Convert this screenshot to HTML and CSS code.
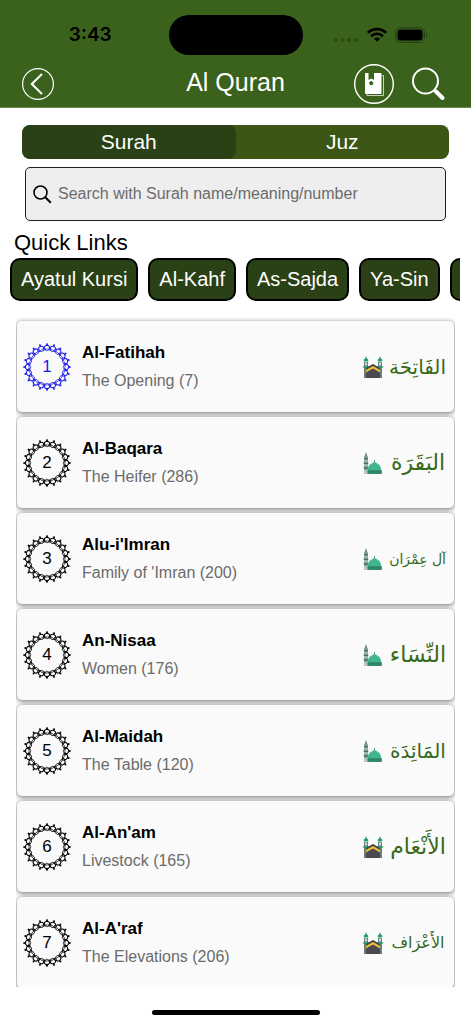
FILE: index.html
```html
<!DOCTYPE html>
<html lang="en">
<head>
    <meta charset="UTF-8">
    <meta name="viewport" content="width=device-width, initial-scale=1.0">
    <title>Al Quran</title>
    <link rel="stylesheet" href="styles.css">
</head>
<body>
    <!-- shared icons -->
    <svg class="defs" aria-hidden="true">
        <symbol id="rosette" viewBox="0 0 48 48">
            <defs>
                <g id="petal">
                    <path d="M22.500 6C20 4.800 21.800 2.400 24 2.400C26.200 2.400 28 4.800 25.500 6" fill="none" stroke="currentColor" stroke-width="1.100"/>
                    <path d="M20.900 6.900Q24 5 27.100 6.900M21 6.500Q24 9.200 27 6.500" fill="none" stroke="currentColor" stroke-width="0.700"/>
                    <circle cx="24" cy="1.200" r="1" fill="currentColor"/>
                </g>
                <g id="quarter">
                    <use href="#petal"/>
                    <use href="#petal" transform="rotate(18 24 24)"/>
                    <use href="#petal" transform="rotate(36 24 24)"/>
                    <use href="#petal" transform="rotate(54 24 24)"/>
                    <use href="#petal" transform="rotate(72 24 24)"/>
                </g>
            </defs>
            <use href="#quarter"/>
            <use href="#quarter" transform="rotate(90 24 24)"/>
            <use href="#quarter" transform="rotate(180 24 24)"/>
            <use href="#quarter" transform="rotate(270 24 24)"/>
        </symbol>
        <symbol id="kaaba" viewBox="0 0 20 22">
            <path d="M1 6h4v16H1zM15 6h4v16h-4z" fill="#66827c"/>
            <path d="M3 0l1.200 3H1.800zM17 0l1.200 3h-2.400zM0.800 3h4.400v2.400H.8zM14.800 3h4.400v2.400h-4.400zM0.300 10h5.400v2H.3zM14.300 10h5.400v2h-5.400z" fill="#2c9a76"/>
            <path d="M2 6.500h2v3H2zM16 6.500h2v3h-2z" fill="#c5ddd5"/>
            <path d="M3 13l7-4.500 7 4.500v9H3z" fill="#4a4850"/>
            <path d="M3 14l7-4 7 4v2.400l-7-4-7 4z" fill="#f0bd32"/>
            <path d="M3.500 12.300L10 8.500l6.500 3.800" fill="none" stroke="#34323a"/>
        </symbol>
        <symbol id="mosque" viewBox="0 0 20 22">
            <path d="M3 0l1.500 4h-3zM1.300 4h3.400v18H1.300z" fill="#71958c"/>
            <path d="M1 6h4v1.500H1zM.7 10.500h4.600V12H.7zM.7 15h4.600v1.500H.7z" fill="#48766a"/>
            <path d="M2.400 7.500h1.200v3H2.400zM2.400 12h1.200v3H2.400zM1 18h4v4H1z" fill="#b4c9c2"/>
            <path d="M11.500 8v3" stroke="#2e8468" stroke-width="0.800"/>
            <path d="M5 18.500c-.5-5.500 3.500-7 6.500-8.500 3 1.500 7 3 6.500 8.500z" fill="#43b58d"/>
            <path d="M4.500 18h14.300v4H4.500z" fill="#309270"/>
            <path d="M5 20h13.500" stroke="#206b54" stroke-dasharray="1 1"/>
        </symbol>
    </svg>

    <header class="header">
        <div class="status-bar">
            <span class="time">3:43</span>
            <div class="island"></div>
            <div class="status-icons">
                <svg width="25" height="16" viewBox="0 0 25 16" fill="#2b4b14"><circle cx="2" cy="13" r="2"/><circle cx="8.500" cy="13" r="2"/><circle cx="15" cy="13" r="2"/><circle cx="21.500" cy="13" r="2"/></svg>
                <svg width="20" height="16" viewBox="0 0 20 16" fill="none" stroke="#000" stroke-width="2.600"><path d="M.9 5.800a13 13 0 0 1 18.200 0M4.100 9.200a8.500 8.500 0 0 1 11.800 0"/><path d="M10 14.800l-3-3a4.500 4.500 0 0 1 6 0z" fill="#000" stroke="none"/></svg>
                <svg width="33" height="16" viewBox="0 0 33 16"><rect x=".7" y=".7" width="28.600" height="14.600" rx="4.500" fill="none" stroke="#213b0f" stroke-width="1"/><rect x="2.500" y="2.500" width="25" height="11" rx="3" fill="#000"/><path d="M31 5.500q2 2.500 0 5z" fill="#213b0f"/></svg>
            </div>
        </div>
        <nav class="nav">
            <button class="icon-btn" aria-label="Back">
                <svg width="32" height="32" viewBox="0 0 32 32" fill="none" stroke="#fff"><circle cx="16" cy="16" r="15.400" stroke-width="1.200"/><path d="M20 6L9.800 16 20 26" stroke-width="2"/></svg>
            </button>
            <h1>Al Quran</h1>
            <div class="nav-right">
                <button class="icon-btn" aria-label="Bookmarks">
                    <svg width="40" height="40" viewBox="0 0 40 40"><circle cx="20" cy="20" r="19.300" fill="none" stroke="#fff" stroke-width="1.400"/><path d="M13 30v1.500h16.500V11.500H28" fill="none" stroke="#c6d3bc"/><path d="M11 10q0-1 1-1h2.500v7l2.700-1.500 2.800 1.500V9h6.500q1 0 1 1v20H12q-1 0-1-1z" fill="#fff"/><path d="M17.200 16.800l2.200 1.600-.8 2.600h-2.800l-.8-2.600z" fill="#3a621c"/></svg>
                </button>
                <button class="icon-btn" aria-label="Search">
                    <svg width="33" height="34" viewBox="0 0 33 34" fill="none" stroke="#fff"><circle cx="13.500" cy="14" r="12.500" stroke-width="2"/><path d="M22 22.500l3 3" stroke-width="2"/><path d="M24 24.500l6.500 6.500" stroke-width="4" stroke-linecap="round"/></svg>
                </button>
            </div>
        </nav>
    </header>

    <main class="main">
        <div class="tabs">
            <button class="tab active">Surah</button>
            <button class="tab">Juz</button>
        </div>

        <div class="search-box">
            <label for="search" aria-label="Search">
                <svg width="19" height="19" viewBox="0 0 19 19" fill="none" stroke="#000" stroke-width="1.600"><circle cx="7.500" cy="7.500" r="6.500"/><path d="M12.300 12.300l5.500 5.500" stroke-width="2"/></svg>
            </label>
            <input type="text" id="search" placeholder="Search with Surah name/meaning/number">
        </div>

        <h2>Quick Links</h2>
        <div class="quick-links">
            <button>Ayatul Kursi</button>
            <button>Al-Kahf</button>
            <button>As-Sajda</button>
            <button>Ya-Sin</button>
            <button aria-label="More links"></button>
        </div>

        <div class="surah-list">
            <a class="surah current" href="#1">
                <span class="number"><svg><use href="#rosette"/></svg><span>1</span></span>
                <span class="info"><strong>Al-Fatihah</strong><small>The Opening (7)</small></span>
                <svg class="place"><use href="#kaaba"/></svg>
                <span class="arabic" lang="ar" dir="rtl">الفَاتِحَة</span>
            </a>
            <a class="surah" href="#2">
                <span class="number"><svg><use href="#rosette"/></svg><span>2</span></span>
                <span class="info"><strong>Al-Baqara</strong><small>The Heifer (286)</small></span>
                <svg class="place"><use href="#mosque"/></svg>
                <span class="arabic large" lang="ar" dir="rtl">البَقَرَة</span>
            </a>
            <a class="surah" href="#3">
                <span class="number"><svg><use href="#rosette"/></svg><span>3</span></span>
                <span class="info"><strong>Alu-i'Imran</strong><small>Family of 'Imran (200)</small></span>
                <svg class="place"><use href="#mosque"/></svg>
                <span class="arabic small" lang="ar" dir="rtl">آل عِمْرَان</span>
            </a>
            <a class="surah" href="#4">
                <span class="number"><svg><use href="#rosette"/></svg><span>4</span></span>
                <span class="info"><strong>An-Nisaa</strong><small>Women (176)</small></span>
                <svg class="place"><use href="#mosque"/></svg>
                <span class="arabic large" lang="ar" dir="rtl">النِّسَاء</span>
            </a>
            <a class="surah" href="#5">
                <span class="number"><svg><use href="#rosette"/></svg><span>5</span></span>
                <span class="info"><strong>Al-Maidah</strong><small>The Table (120)</small></span>
                <svg class="place"><use href="#mosque"/></svg>
                <span class="arabic" lang="ar" dir="rtl">المَائِدَة</span>
            </a>
            <a class="surah" href="#6">
                <span class="number"><svg><use href="#rosette"/></svg><span>6</span></span>
                <span class="info"><strong>Al-An'am</strong><small>Livestock (165)</small></span>
                <svg class="place"><use href="#kaaba"/></svg>
                <span class="arabic large" lang="ar" dir="rtl">الأَنْعَام</span>
            </a>
            <a class="surah" href="#7">
                <span class="number"><svg><use href="#rosette"/></svg><span>7</span></span>
                <span class="info"><strong>Al-A'raf</strong><small>The Elevations (206)</small></span>
                <svg class="place"><use href="#kaaba"/></svg>
                <span class="arabic medium" lang="ar" dir="rtl">الأَعْرَاف</span>
            </a>
        </div>
    </main>

    <footer class="home-bar"><div></div></footer>
</body>
</html>
```

FILE: styles.css
```css
* {
    box-sizing: border-box;
}
body {
    margin: 0;
    height: 100vh;
    display: flex;
    flex-direction: column;
    overflow: hidden;
    background: #fff;
    color: #000;
    font-family: "Liberation Sans", Arial, sans-serif;
}
button {
    font-family: inherit;
    cursor: pointer;
}
svg {
    display: block;
    flex-shrink: 0;
}
.defs {
    position: absolute;
    width: 0;
    height: 0;
}

/* header */
.header {
    background: #3a621c;
    border-bottom: 1px solid #6a8a52;
    padding: 15px 0 3px;
}
.status-bar {
    display: grid;
    grid-template-columns: 1fr 134px 1fr;
    align-items: center;
}
.time {
    padding-left: 12px;
    text-align: center;
    font: 600 19px/24px Inter, sans-serif;
}
.island {
    height: 40px;
    border-radius: 20px;
    background: #000;
}
.status-icons {
    display: flex;
    justify-content: center;
    gap: 8px;
    padding-right: 12px;
}
.nav {
    display: grid;
    grid-template-columns: 1fr auto 1fr;
    align-items: center;
    padding: 9px 26px 0;
}
.nav h1 {
    margin: 0;
    padding-bottom: 4px;
    color: #fff;
    font-size: 25px;
    font-weight: normal;
    line-height: 32px;
}
.nav-right {
    display: flex;
    justify-content: flex-end;
    align-items: center;
    gap: 18px;
}
.icon-btn {
    padding: 0;
    border: none;
    background: none;
    justify-self: start;
}
.nav > .icon-btn {
    margin-left: -4px;
}

/* content */
.main {
    flex: 1;
    min-height: 0;
    display: flex;
    flex-direction: column;
    padding-top: 17px;
}
.tabs {
    display: flex;
    margin: 0 22px;
    border-radius: 8px;
    background: #3b5615;
    overflow: hidden;
}
.tab {
    flex: 1;
    height: 34px;
    padding: 0;
    border: none;
    border-radius: 8px;
    background: none;
    color: #fff;
    font-size: 21px;
}
.tab.active {
    background: #2a4015;
}
.search-box {
    display: flex;
    align-items: center;
    gap: 6px;
    height: 54px;
    flex-shrink: 0;
    margin: 8px 25px 0;
    padding: 0 7px;
    border: 1px solid #222;
    border-radius: 5px;
    background: #eee;
}
.search-box input {
    flex: 1;
    min-width: 0;
    padding: 0;
    border: none;
    outline: none;
    background: none;
    font-family: inherit;
    font-size: 16px;
}
.search-box input::placeholder {
    color: #6b6b6b;
}
.main h2 {
    margin: 9px 14px 2px;
    font-size: 22px;
    font-weight: normal;
    line-height: 26px;
}
.quick-links {
    display: flex;
    flex-shrink: 0;
    gap: 10px;
    margin: 0 11px 0 10px;
    overflow: hidden;
}
.quick-links button {
    flex-shrink: 0;
    min-width: 64px;
    height: 43px;
    padding: 0 9px;
    border: 2px solid #000;
    border-radius: 10px;
    background: #2a4015;
    color: #fff;
    font-size: 20px;
}

/* surah list */
.surah-list {
    flex: 1;
    min-height: 0;
    display: flex;
    flex-direction: column;
    gap: 5px;
    margin: 16px 16px 0;
    padding: 4px 1px;
    overflow: hidden;
}
.surah {
    display: flex;
    align-items: center;
    flex-shrink: 0;
    height: 91px;
    padding: 0 8px 0 6px;
    border-radius: 5px;
    background: #fafafa;
    box-shadow: 0 1px 5px rgba(0, 0, 0, 0.6);
    color: #000;
    text-decoration: none;
}
.number {
    display: grid;
    place-items: center;
    margin-right: 11px;
    font-size: 17px;
}
.number svg,
.number span {
    grid-area: 1 / 1;
}
.number svg {
    width: 48px;
    height: 48px;
}
.current .number {
    color: #1c1ce8;
}
.info {
    flex: 1;
    display: flex;
    flex-direction: column;
    gap: 8px;
}
.info strong {
    font-size: 17px;
    line-height: 20px;
}
.info small {
    color: #6b6b6b;
    font-size: 16px;
    line-height: 20px;
}
.place {
    width: 20px;
    height: 22px;
    margin-right: 7px;
}
.arabic {
    width: 56px;
    color: #37691a;
    font-family: "DejaVu Sans", sans-serif;
    font-size: 20px;
    line-height: 30px;
    text-align: center;
    white-space: nowrap;
}
.arabic.large {
    font-size: 22px;
}
.arabic.medium {
    font-size: 16px;
}
.arabic.small {
    font-size: 14px;
}

.home-bar {
    display: flex;
    justify-content: center;
    height: 37px;
    padding-top: 23px;
}
.home-bar div {
    width: 168px;
    height: 5px;
    border-radius: 3px;
    background: #000;
}
```
